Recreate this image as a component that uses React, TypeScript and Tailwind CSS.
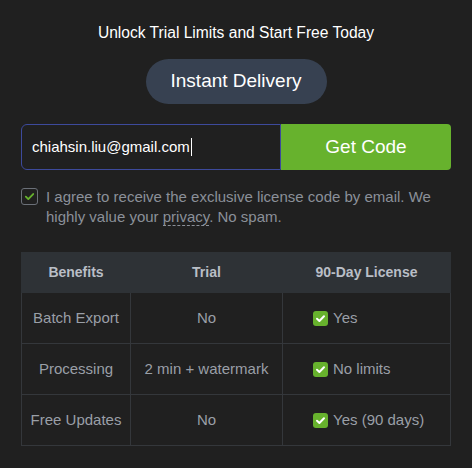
import React from "react";

function GreenCheck() {
  return (
    <span className="inline-flex h-[15px] w-[15px] shrink-0 items-center justify-center rounded-[3px] bg-[#67b22d]">
      <svg width="11" height="11" viewBox="0 0 12 12" fill="none">
        <path d="M2.2 6.3 L4.8 8.7 L9.8 3.6" stroke="#ffffff" strokeWidth="2.2" strokeLinecap="round" strokeLinejoin="round" />
      </svg>
    </span>
  );
}

const rows = [
  { b: "Batch Export", t: "No", l: "Yes" },
  { b: "Processing", t: "2 min + watermark", l: "No limits" },
  { b: "Free Updates", t: "No", l: "Yes (90 days)" },
];

export default function App() {
  return (
    <div
      className="min-h-[468px] w-[472px] bg-[#202020] px-[21px] pt-[22px]"
      style={{ fontFamily: '"Liberation Sans", Arial, sans-serif' }}
    >
      <div className="text-center text-[15.6px] leading-[22px] text-white">
        Unlock Trial Limits and Start Free Today
      </div>
      <div className="mt-[15px] flex justify-center">
        <div className="flex h-[45px] w-[181px] items-center justify-center rounded-full bg-[#374151] text-[19px] text-white">
          Instant Delivery
        </div>
      </div>
      <div className="mt-[20px] flex h-[46px]">
        <div className="flex w-[260px] items-center rounded-l-[6px] border border-[#3d4a9c] bg-[#202020] pl-[10px] text-[15px] text-white">
          chiahsin.liu@gmail.com
          <span className="ml-[1px] inline-block h-[18px] w-[1px] bg-white" />
        </div>
        <div className="flex flex-1 items-center justify-center rounded-r-[4px] bg-[#67b22d] text-[19px] text-white">
          Get Code
        </div>
      </div>
      <div className="mt-[17px] flex gap-[8px]">
        <span className="mt-[1px] flex h-[17px] w-[17px] shrink-0 items-center justify-center rounded-[3px] border border-[#6b7078]">
          <svg width="11" height="11" viewBox="0 0 12 12" fill="none">
            <path d="M2 6.2 L4.7 8.8 L10 3.3" stroke="#67b22d" strokeWidth="2" strokeLinecap="round" strokeLinejoin="round" />
          </svg>
        </span>
        <p className="text-[15px] leading-[20px] text-[#8b9099]">
          I agree to receive the exclusive license code by email. We highly value your{" "}
          <span className="border-b border-dashed border-[#8b9099]">privacy</span>. No spam.
        </p>
      </div>
      <table className="mt-[25px] w-[430px] border-collapse text-[15px]">
        <thead>
          <tr className="h-[40px] bg-[#2e3236]">
            <th className="w-[109px] border border-[#2e3236] text-[14px] font-bold text-[#b9bec6]">Benefits</th>
            <th className="w-[152px] border border-[#2e3236] text-[14px] font-bold text-[#b9bec6]">Trial</th>
            <th className="border border-[#2e3236] text-[14px] font-bold text-[#b9bec6]">90-Day License</th>
          </tr>
        </thead>
        <tbody>
          {rows.map((r) => (
            <tr key={r.b} className="h-[51px]">
              <td className="border border-[#34373b] text-center text-[#9a9fa7]">{r.b}</td>
              <td className="border border-[#34373b] text-center text-[#9a9fa7]">{r.t}</td>
              <td className="border border-[#34373b] pl-[30px] text-[#9a9fa7]">
                <div className="flex items-center gap-[5px]">
                  <GreenCheck />
                  <span>{r.l}</span>
                </div>
              </td>
            </tr>
          ))}
        </tbody>
      </table>
    </div>
  );
}
